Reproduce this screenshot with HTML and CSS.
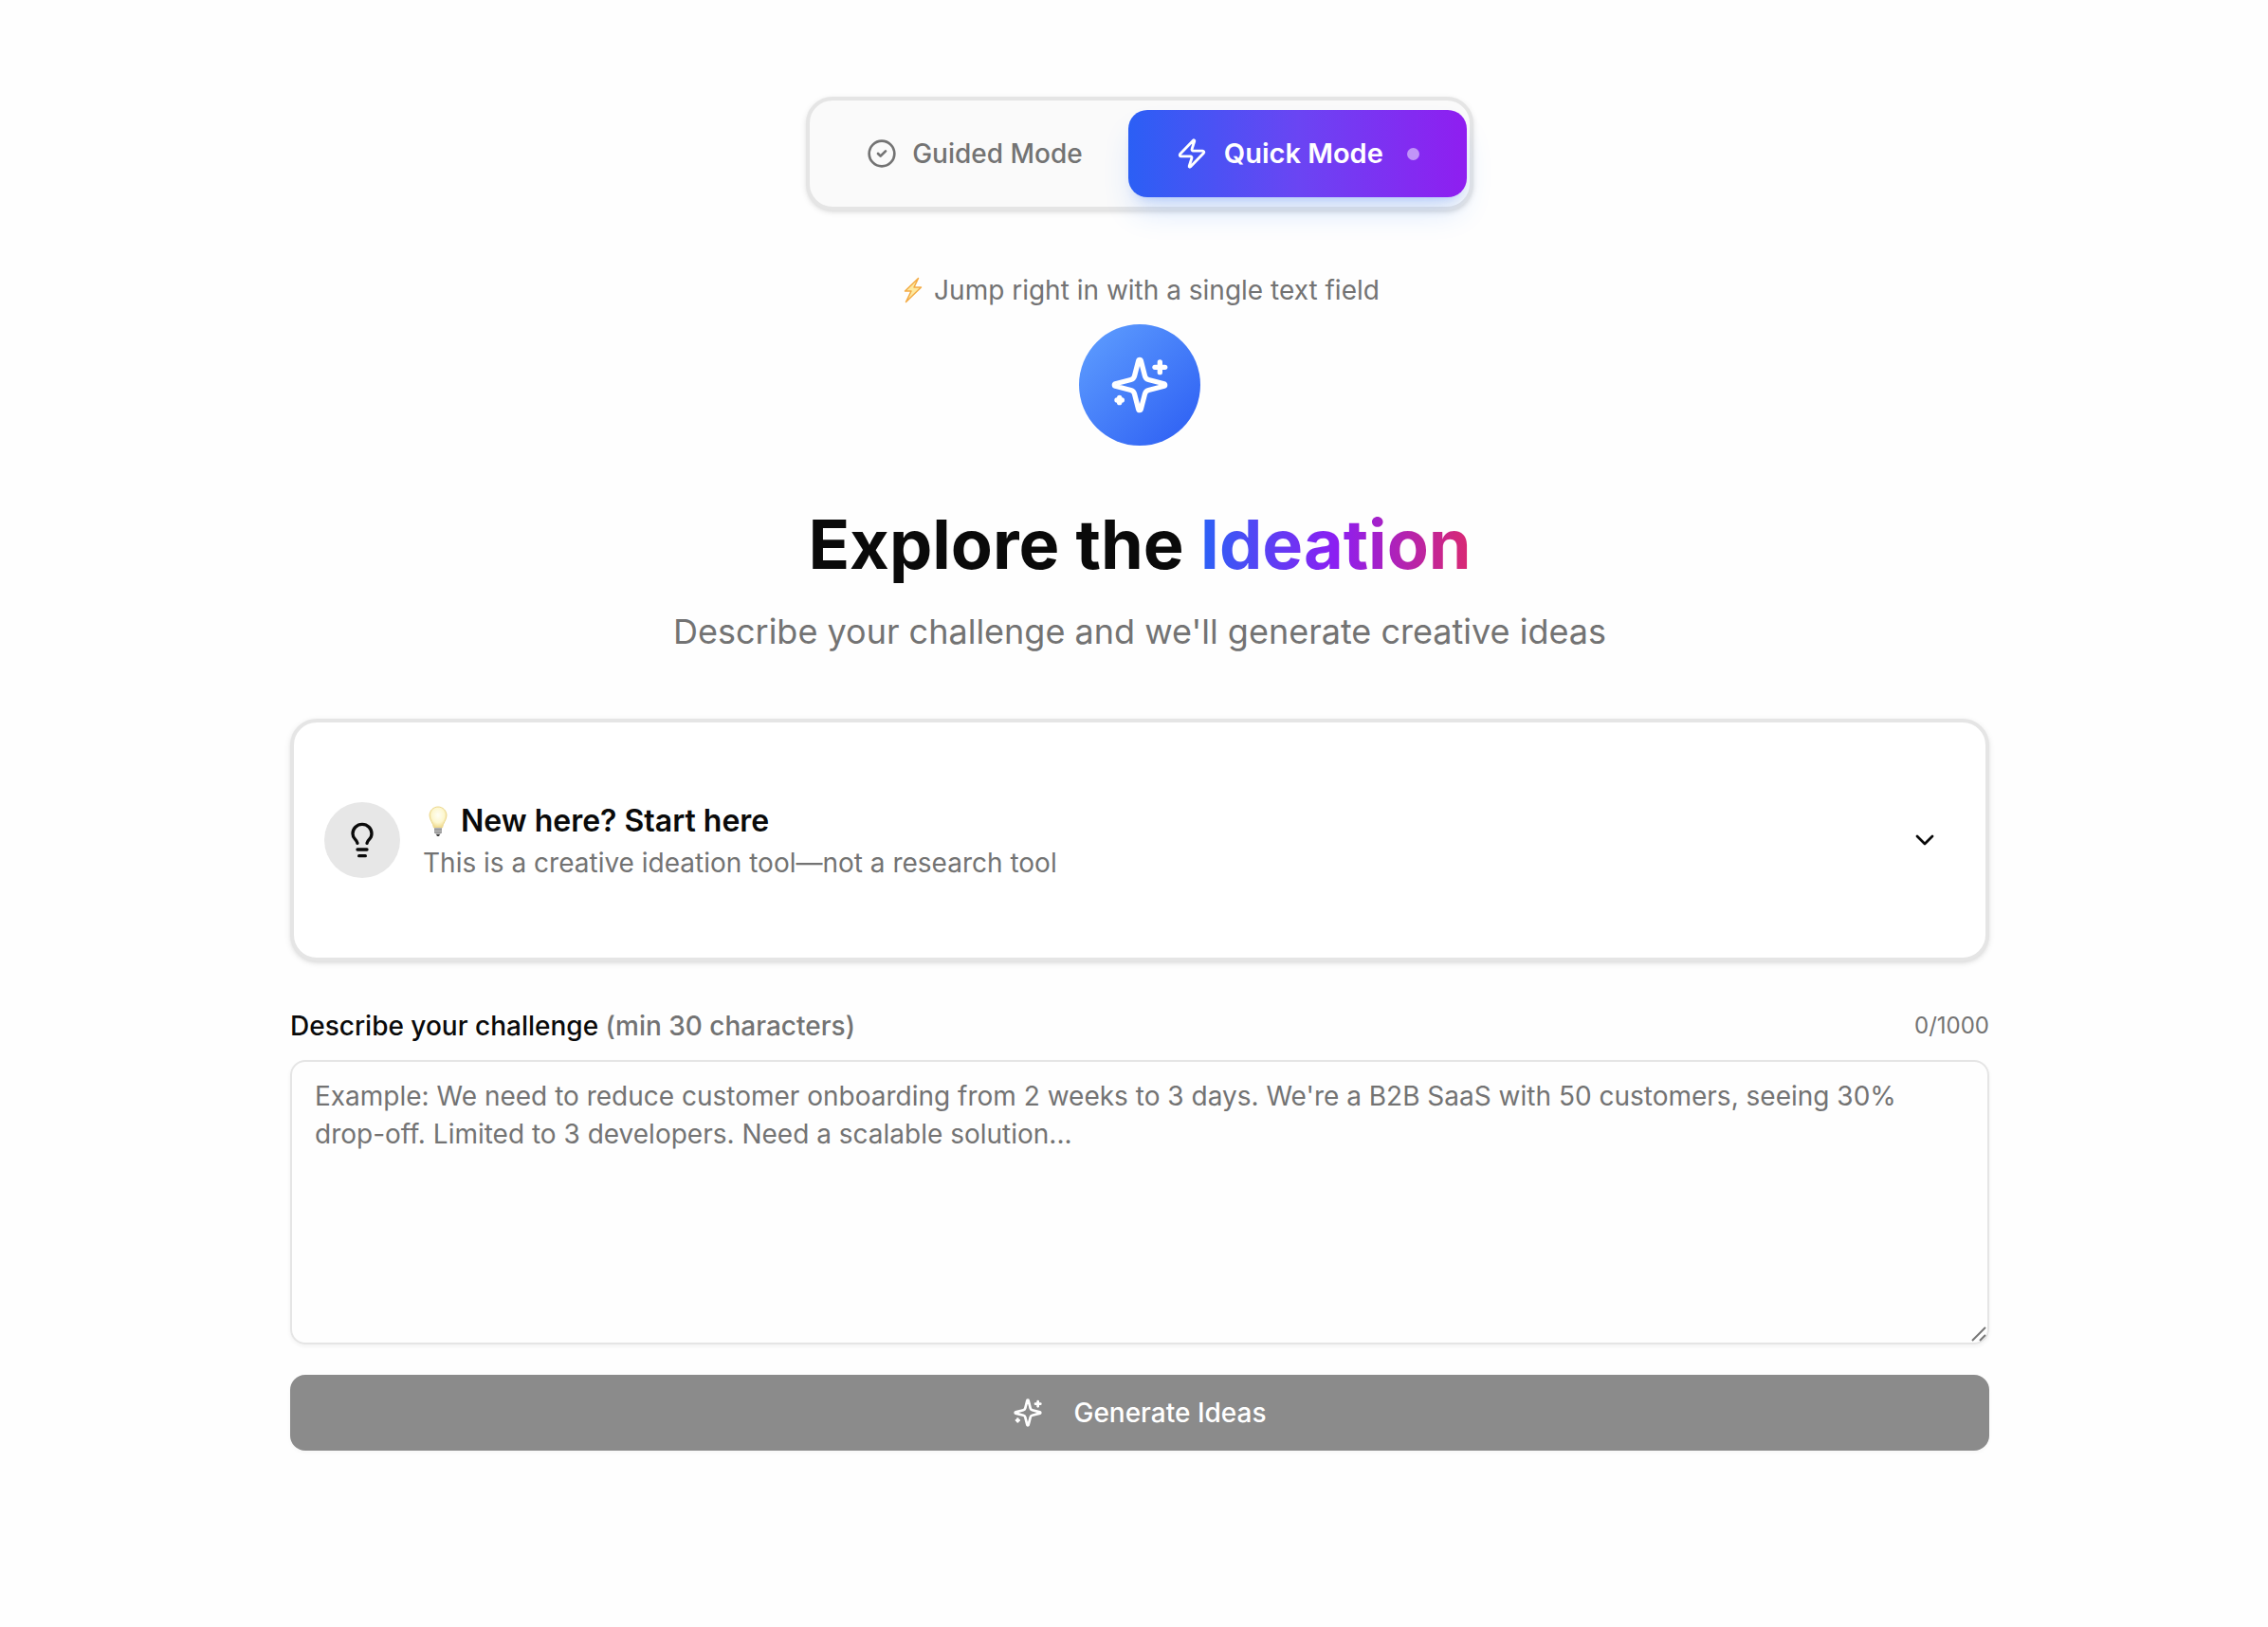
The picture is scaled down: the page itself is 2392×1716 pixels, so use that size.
FILE: index.html
```html
<!DOCTYPE html>
<html lang="en">
<head>
<meta charset="utf-8">
<meta name="viewport" content="width=device-width, initial-scale=1">
<title>Explore the Ideation</title>
<link rel="stylesheet" href="styles.css">
</head>
<body>
<main class="page">
  <div class="mode-switch" role="group" aria-label="Mode">
    <button type="button" class="mode" aria-pressed="false">
      <svg class="icon" viewBox="0 0 24 24" aria-hidden="true"><circle cx="12" cy="12" r="10"/><path d="m9 12 2 2 4-4"/></svg>
      Guided Mode
    </button>
    <button type="button" class="mode mode-active" aria-pressed="true">
      <svg class="icon icon-zap" viewBox="0 0 24 24" aria-hidden="true"><path d="M4 14a1 1 0 0 1-.78-1.63l9.9-10.2a.5.5 0 0 1 .86.46l-1.92 6.02A1 1 0 0 0 13 10h7a1 1 0 0 1 .78 1.63l-9.9 10.2a.5.5 0 0 1-.86-.46l1.92-6.02A1 1 0 0 0 11 14z"/></svg>
      Quick Mode
      <span class="mode-dot"></span>
    </button>
  </div>

  <p class="mode-hint">
    <svg class="emoji-bolt" viewBox="0 0 20 28" aria-hidden="true"><path d="M15.500 1.500 1.500 15h6.500L2.500 26.500 18.500 11H11z" fill="#fde9a0" stroke="#f3ab45" stroke-width="1.500" stroke-linejoin="round"/></svg>
    Jump right in with a single text field
  </p>

  <header class="hero">
    <div class="hero-badge">
      <svg class="icon icon-hero" viewBox="0 0 24 24" aria-hidden="true"><path d="M9.937 15.5A2 2 0 0 0 8.5 14.063l-6.135-1.582a.5.5 0 0 1 0-.962L8.5 9.936A2 2 0 0 0 9.937 8.5l1.582-6.135a.5.5 0 0 1 .963 0L14.063 8.5A2 2 0 0 0 15.5 9.937l6.135 1.581a.5.5 0 0 1 0 .964L15.5 14.063a2 2 0 0 0-1.437 1.437l-1.582 6.135a.5.5 0 0 1-.963 0z"/><path d="M20 3v4"/><path d="M22 5h-4"/><path d="M4 17v2"/><path d="M5 18H3"/></svg>
    </div>
    <h1 class="hero-title">Explore the <span class="hero-accent">Ideation</span></h1>
    <p class="hero-subtitle">Describe your challenge and we'll generate creative ideas</p>
  </header>

  <button type="button" class="intro-card" aria-expanded="false">
    <span class="intro-icon">
      <svg class="icon icon-bulb" viewBox="0 0 24 24" aria-hidden="true"><path d="M15 14c.2-1 .7-1.700 1.500-2.500 1-.9 1.500-2.200 1.500-3.500A6 6 0 0 0 6 8c0 1 .2 2.200 1.500 3.500.7.7 1.300 1.500 1.500 2.500"/><path d="M9 18h6"/><path d="M10 22h4"/></svg>
    </span>
    <span class="intro-text">
      <span class="intro-title">
        <svg class="emoji-bulb" viewBox="0 0 20 32" aria-hidden="true">
          <defs><radialGradient id="glow" cx=".5" cy=".4" r=".6"><stop offset="0" stop-color="#fffef4"/><stop offset=".6" stop-color="#fdf7cf"/><stop offset="1" stop-color="#efd98a"/></radialGradient></defs>
          <path d="M10 1c5 0 9 4 9 9 0 5-4 8-4.500 13h-9C5 18 1 15 1 10c0-5 4-9 9-9z" fill="url(#glow)" stroke="#ecd78c"/>
          <path d="M6 23h8v5l-2 2H8l-2-2z" fill="#b5b5b5"/><path d="M6 25h8M6 28h8" stroke="#858585"/><path d="M8 30h4l-1 2H9z" fill="#444"/>
        </svg>
        New here? Start here
      </span>
      <span class="intro-subtitle">This is a creative ideation tool—not a research tool</span>
    </span>
    <svg class="icon icon-chevron" viewBox="0 0 24 24" aria-hidden="true"><path d="m6 9 6 6 6-6"/></svg>
  </button>

  <form class="challenge">
    <div class="challenge-head">
      <label class="challenge-label" for="challenge">Describe your challenge <span class="muted">(min 30 characters)</span></label>
      <span class="challenge-count">0/1000</span>
    </div>
    <div class="challenge-field">
      <textarea class="challenge-input" id="challenge" maxlength="1000" placeholder="Example: We need to reduce customer onboarding from 2 weeks to 3 days. We're a B2B SaaS with 50 customers, seeing 30% drop-off. Limited to 3 developers. Need a scalable solution..."></textarea>
      <svg class="challenge-grip" viewBox="0 0 16 16" aria-hidden="true"><path d="M1 15 15 1M9 15l6-6"/></svg>
    </div>
    <button type="submit" class="submit" disabled>
      <svg class="icon" viewBox="0 0 24 24" aria-hidden="true"><path d="M9.937 15.5A2 2 0 0 0 8.5 14.063l-6.135-1.582a.5.5 0 0 1 0-.962L8.5 9.936A2 2 0 0 0 9.937 8.5l1.582-6.135a.5.5 0 0 1 .963 0L14.063 8.5A2 2 0 0 0 15.5 9.937l6.135 1.581a.5.5 0 0 1 0 .964L15.5 14.063a2 2 0 0 0-1.437 1.437l-1.582 6.135a.5.5 0 0 1-.963 0z"/><path d="M20 3v4"/><path d="M22 5h-4"/><path d="M4 17v2"/><path d="M5 18H3"/></svg>
      Generate Ideas
    </button>
  </form>
</main>
</body>
</html>
```
FILE: styles.css
```css
*,
*::before,
*::after {
  box-sizing: border-box;
}

body {
  margin: 0;
  padding-left: 12px;
  background: #fefefe;
  color: #0a0a0a;
  font-family: Inter, "Liberation Sans", sans-serif;
  font-size: 28px;
  line-height: 40px;
}

h1,
p {
  margin: 0;
}

button {
  font: inherit;
  color: inherit;
  border: 0;
  cursor: pointer;
}

.page {
  display: flex;
  flex-direction: column;
  align-items: center;
  max-width: 1856px;
  margin: 0 auto;
  padding: 102px 32px 96px;
}

.icon {
  flex: none;
  width: 32px;
  height: 32px;
  fill: none;
  stroke: currentColor;
  stroke-width: 2;
  stroke-linecap: round;
  stroke-linejoin: round;
}

.muted {
  color: #737373;
}

/* Mode switch */
.mode-switch {
  display: flex;
  padding: 10px 3px 10px 12px;
  border: 4px solid #e5e5e5;
  border-radius: 28px;
  background: #fafafa;
  box-shadow: 0 2px 6px rgba(0, 0, 0, 0.1), 0 2px 4px -2px rgba(0, 0, 0, 0.1);
}

.mode {
  display: flex;
  align-items: center;
  gap: 16px;
  height: 92px;
  padding: 0 48px;
  border-radius: 20px;
  background: transparent;
  color: #737373;
  font-weight: 500;
}

.mode-active {
  gap: 17px;
  padding: 0 50px;
  background: linear-gradient(90deg, #2b5ff5, #6a45f3 50%, #8f1ef0);
  color: #fff;
  font-size: 29px;
  font-weight: 600;
  box-shadow: 0 20px 32px -6px rgba(43, 127, 255, 0.2), 0 8px 12px -8px rgba(43, 95, 245, 0.3);
}

.icon-zap {
  width: 34px;
  height: 34px;
}

.mode-dot {
  width: 13px;
  height: 13px;
  margin-left: 8px;
  border-radius: 50%;
  background: rgba(255, 255, 255, 0.5);
}

.mode-hint {
  display: flex;
  align-items: center;
  gap: 12px;
  margin-top: 64px;
  padding-left: 4px;
  color: #737373;
}

.emoji-bolt {
  width: 20px;
  height: 28px;
}

/* Hero */
.hero {
  display: flex;
  flex-direction: column;
  align-items: center;
  margin-top: 16px;
  text-align: center;
}

.hero-badge {
  display: grid;
  place-items: center;
  width: 128px;
  height: 128px;
  border-radius: 50%;
  background: linear-gradient(135deg, #60a0ff, #2b5cf3);
  color: #fff;
}

.icon-hero {
  width: 64px;
  height: 64px;
}

.hero-title {
  margin-top: 64px;
  font-size: 72px;
  line-height: 80px;
  font-weight: 700;
}

.hero-accent {
  background: linear-gradient(90deg, #2b62f6, #8c1ef2 50%, #da2870);
  background-clip: text;
  -webkit-background-clip: text;
  color: transparent;
}

.hero-subtitle {
  margin-top: 24px;
  color: #737373;
  font-size: 36px;
  line-height: 56px;
}

/* Intro card */
.intro-card {
  display: flex;
  align-items: center;
  gap: 24px;
  width: 100%;
  min-height: 256px;
  margin-top: 64px;
  padding: 32px 48px 32px 32px;
  border: 4px solid #e5e5e5;
  border-radius: 28px;
  background: #fff;
  text-align: left;
  box-shadow: 0 2px 6px rgba(0, 0, 0, 0.1), 0 2px 4px -2px rgba(0, 0, 0, 0.1);
}

.intro-icon {
  display: grid;
  place-items: center;
  flex: none;
  width: 80px;
  height: 80px;
  border-radius: 50%;
  background: #e7e7e7;
}

.icon-bulb {
  width: 40px;
  height: 40px;
}

.intro-text {
  display: flex;
  flex: 1;
  flex-direction: column;
}

.intro-title {
  display: flex;
  align-items: center;
  gap: 14px;
  padding-left: 6px;
  font-size: 32px;
  line-height: 48px;
  font-weight: 600;
}

.emoji-bulb {
  width: 20px;
  height: 32px;
}

.intro-subtitle {
  color: #737373;
}

/* Challenge form */
.challenge {
  display: flex;
  flex-direction: column;
  width: 100%;
  margin-top: 48px;
}

.challenge-head {
  display: flex;
  align-items: center;
  justify-content: space-between;
}

.challenge-label {
  font-weight: 500;
}

.challenge-count {
  color: #737373;
  font-size: 24px;
  line-height: 32px;
}

.challenge-field {
  position: relative;
  display: flex;
  margin-top: 16px;
}

.challenge-input {
  flex: 1;
  height: 300px;
  padding: 16px 24px;
  border: 2px solid #e5e5e5;
  border-radius: 16px;
  background: transparent;
  color: inherit;
  font: inherit;
  resize: none;
  box-shadow: 0 2px 4px rgba(0, 0, 0, 0.05);
}

.challenge-input::placeholder {
  color: #737373;
  opacity: 1;
}

.challenge-grip {
  position: absolute;
  right: 3px;
  bottom: 3px;
  width: 16px;
  height: 16px;
  fill: none;
  stroke: #777;
  stroke-width: 2;
  pointer-events: none;
}

.submit {
  display: flex;
  align-items: center;
  justify-content: center;
  gap: 32px;
  height: 80px;
  margin-top: 32px;
  border-radius: 16px;
  background: #8b8b8b;
  color: #fff;
  font-weight: 500;
  box-shadow: 0 2px 4px rgba(0, 0, 0, 0.03);
}
```
